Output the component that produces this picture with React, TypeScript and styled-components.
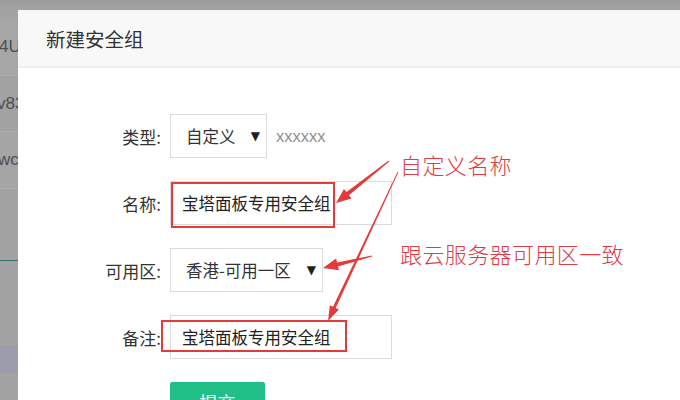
import React from 'react';
import styled, { createGlobalStyle } from 'styled-components';

const GlobalStyle = createGlobalStyle`
  html, body {
    margin: 0;
    padding: 0;
    overflow: hidden;
  }

  body {
    font-family: "Noto Sans CJK SC", "Liberation Sans", sans-serif;
    background: #a2a2a2;
  }
`;

const Page = styled.div`
  position: relative;
  width: 680px;
  height: 400px;
  overflow: hidden;

  display: grid;
  grid-template-columns: 18px 1fr;
  grid-template-rows: 10px 1fr;

  background: #a3a3a3;
`;

const TopShade = styled.div`
  grid-column: 1 / -1;
  grid-row: 1;

  background: linear-gradient(#9b9b9b, #a4a4a4);
`;

const SideStrip = styled.div`
  grid-column: 1;
  grid-row: 2;

  display: flex;
  flex-direction: column;
  overflow: hidden;
`;

const StripRow = styled.div<{ h: number; tone?: string; line?: string }>`
  flex: 0 0 ${(props) => props.h}px;

  display: flex;
  align-items: center;

  font-family: "Liberation Sans", sans-serif;
  font-size: 17px;
  color: #4f4f4f;
  white-space: nowrap;

  background: ${(props) => props.tone || 'transparent'};
  border-bottom: 1px solid ${(props) => props.line || 'transparent'};
`;

const StripText = styled.span<{ shift: number }>`
  margin-left: ${(props) => props.shift}px;
`;

const Modal = styled.div`
  grid-column: 2;
  grid-row: 2;

  display: flex;
  flex-direction: column;

  background: #ffffff;
  border-top: 1px solid #f2f2f2;
`;

const Header = styled.div`
  height: 55px;
  padding-left: 28px;

  display: flex;
  align-items: center;

  font-size: 19.5px;
  color: #333333;

  background: #f8f8f8;
  border-bottom: 2px solid #eeeeee;
`;

const Form = styled.div`
  padding-top: 46px;

  display: grid;
  grid-template-columns: 143px auto;
  grid-auto-rows: 44px;
  column-gap: 9px;
  row-gap: 23px;
  align-items: center;
  justify-content: start;
`;

const Label = styled.div`
  text-align: right;
  font-size: 17px;
  color: #333333;
`;

const Field = styled.div`
  display: flex;
  align-items: center;
`;

const Select = styled.div<{ w: number }>`
  box-sizing: border-box;
  width: ${(props) => props.w}px;
  height: 44px;
  padding: 0 6px 0 15px;

  display: flex;
  align-items: center;
  justify-content: space-between;

  font-size: 16.5px;
  color: #333333;

  border: 1px solid #dcdcdc;
  background: #ffffff;
`;

const Caret = styled.span`
  font-family: "DejaVu Sans", sans-serif;
  font-size: 12px;
  color: #1e1e1e;
`;

const Hint = styled.span`
  margin-left: 9px;

  font-family: "Liberation Sans", sans-serif;
  font-size: 16.5px;
  color: #8f8f8f;
`;

const Input = styled.div`
  box-sizing: border-box;
  width: 222px;
  height: 44px;
  padding-left: 11px;

  display: flex;
  align-items: center;

  font-size: 16.5px;
  color: #222222;

  border: 1px solid #dcdcdc;
`;

const Submit = styled.button`
  width: 95px;
  height: 40px;
  align-self: start;

  font-family: "Noto Sans CJK SC", sans-serif;
  font-size: 18px;
  color: #ffffff;

  background: #1fbf87;
  border: none;
  border-radius: 2px;
`;

const Overlay = styled.svg`
  position: absolute;
  left: 0;
  top: 0;
  pointer-events: none;
`;

const Note = styled.div<{ top: number }>`
  position: absolute;
  left: 400px;
  top: ${(props) => props.top}px;

  font-size: 22px;
  letter-spacing: 0.4px;
  color: #e03a44;
  font-weight: 300;
`;

type Pt = [number, number];

const arrowPoints = (from: Pt, to: Pt, tail: number, shaft: number, headLen: number, headW: number) => {
  const dx = to[0] - from[0];
  const dy = to[1] - from[1];
  const len = Math.hypot(dx, dy);
  const ux = dx / len;
  const uy = dy / len;
  const nx = -uy;
  const ny = ux;
  const bx = to[0] - ux * headLen;
  const by = to[1] - uy * headLen;
  const pts: Pt[] = [
    [from[0] + (nx * tail) / 2, from[1] + (ny * tail) / 2],
    [bx + (nx * shaft) / 2, by + (ny * shaft) / 2],
    [bx + (nx * headW) / 2, by + (ny * headW) / 2],
    to,
    [bx - (nx * headW) / 2, by - (ny * headW) / 2],
    [bx - (nx * shaft) / 2, by - (ny * shaft) / 2],
    [from[0] - (nx * tail) / 2, from[1] - (ny * tail) / 2],
  ];
  return pts.map((p) => `${p[0].toFixed(1)},${p[1].toFixed(1)}`).join(' ');
};

const RED = '#e33a3a';

const Annotations = () => (
  <>
    <Overlay width={680} height={400} viewBox="0 0 680 400">
      <rect x={172} y={183} width={162} height={44} fill="none" stroke={RED} strokeWidth={2} />
      <rect x={162} y={321} width={184} height={30} fill="none" stroke={RED} strokeWidth={2} />
      <polygon points={arrowPoints([389, 161], [336, 203], 1, 4, 15, 12)} fill={RED} />
      <polygon points={arrowPoints([398, 172], [328, 321], 0.8, 3, 15, 10)} fill={RED} />
      <polygon points={arrowPoints([372, 256], [323, 268], 1, 4, 15, 12)} fill={RED} />
    </Overlay>
    <Note top={148}>自定义名称</Note>
    <Note top={237}>跟云服务器可用区一致</Note>
  </>
);

export default function App() {
  return (
    <>
      <GlobalStyle />
      <Page>
        <TopShade />
        <SideStrip>
          <StripRow h={8} />
          <StripRow h={56} tone="#a6a6a6" line="#b0b0b0">
            <StripText shift={-1}>4U</StripText>
          </StripRow>
          <StripRow h={55} tone="#a2a2a2" line="#adadad">
            <StripText shift={-3}>v83</StripText>
          </StripRow>
          <StripRow h={56} tone="#a5a5a5" line="#aeaeae">
            <StripText shift={-2}>wc</StripText>
          </StripRow>
          <StripRow h={71} line="#2f7168" />
          <StripRow h={83} />
          <StripRow h={28} tone="#9d9cab" />
        </SideStrip>

        <Modal>
          <Header>新建安全组</Header>
          <Form>
            <Label>类型:</Label>
            <Field>
              <Select w={97}>
                自定义
                <Caret>▼</Caret>
              </Select>
              <Hint>xxxxxx</Hint>
            </Field>

            <Label>名称:</Label>
            <Input>宝塔面板专用安全组</Input>

            <Label>可用区:</Label>
            <Field>
              <Select w={153}>
                香港-可用一区
                <Caret>▼</Caret>
              </Select>
            </Field>

            <Label>备注:</Label>
            <Input>宝塔面板专用安全组</Input>

            <span />
            <Submit>提交</Submit>
          </Form>
        </Modal>

        <Annotations />
      </Page>
    </>
  );
}
